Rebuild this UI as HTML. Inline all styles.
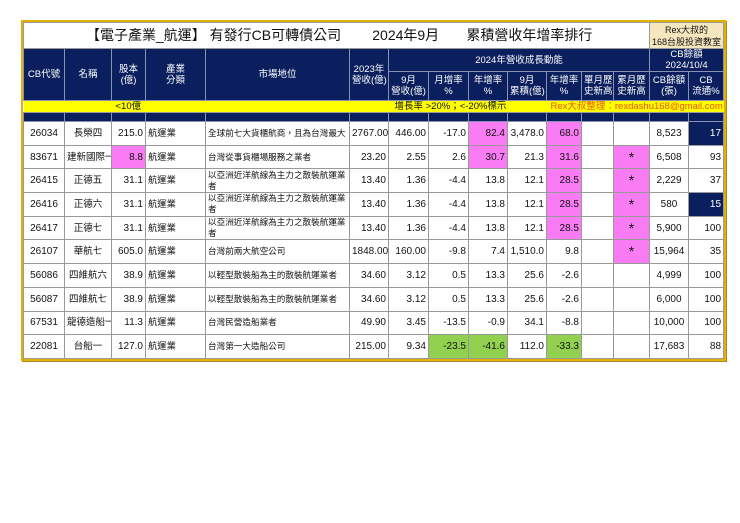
<!DOCTYPE html>
<html><head><meta charset="utf-8"><style>
body{margin:0;background:#fff;width:740px;height:523px;overflow:hidden;font-family:"Liberation Sans","Noto Sans CJK TC",sans-serif;}
.wrap{position:absolute;left:21px;top:20px;border:2px solid #e3b100;box-shadow:1px 1px 0 #a88a2a;}
table{border-collapse:collapse;table-layout:fixed;width:700px;font-size:10px;color:#111;}
td{border:1px solid #999;padding:0 2px;white-space:nowrap;overflow:hidden;text-align:center;line-height:11px;}
.h td{background:#0b1f5e;color:#fff;border-color:#8892b0;line-height:11px;font-size:9.5px;}
.t td{height:25px;font-size:14px;border-color:#999;}
.y td{background:#ffff00;height:11px;border:none;border-bottom:1px solid #999;font-size:9.5px;line-height:11px;}
.d td{background:#0b1f5e;height:8px;border-color:#8892b0;border-top:none;}
.r td{height:22.7px;}
.r td.n{text-align:right;}
.r td.l{text-align:left;font-size:8.6px;}
.r td.i{text-align:left;font-size:9.3px;}
.r td.c{font-size:9.5px;}
.p{background:#f97cf5;}
.g{background:#92d050;}
.nv{background:#0b1f5e;color:#fff;}
.st{font-size:14px;}
</style></head><body>
<div class="wrap"><table>
<colgroup><col style="width:41px"><col style="width:47px"><col style="width:34px"><col style="width:60px"><col style="width:144px"><col style="width:39px"><col style="width:40px"><col style="width:40px"><col style="width:39px"><col style="width:39px"><col style="width:35px"><col style="width:32px"><col style="width:36px"><col style="width:39px"><col style="width:35px"></colgroup>
<tr class="t"><td colspan="13" style="text-align:left;padding-left:62px">【電子產業_航運】 有發行CB可轉債公司&nbsp;&nbsp;&nbsp;&nbsp;&nbsp;&nbsp;&nbsp;&nbsp;2024年9月&nbsp;&nbsp;&nbsp;&nbsp;&nbsp;&nbsp;&nbsp;累積營收年增率排行</td><td colspan="2" style="background:#f5e6bd;font-size:9px;line-height:12px">Rex大叔的<br>168台股投資教室</td></tr>
<tr class="h" style="height:21px"><td rowspan="2">CB代號</td><td rowspan="2">名稱</td><td rowspan="2">股本<br>(億)</td><td rowspan="2">產業<br>分類</td><td rowspan="2">市場地位</td><td rowspan="2">2023年<br>營收(億)</td><td colspan="7">2024年營收成長動能</td><td colspan="2">CB餘額<br>2024/10/4</td></tr>
<tr class="h" style="height:29px"><td>9月<br>營收(億)</td><td>月增率<br>%</td><td>年增率<br>%</td><td>9月<br>累積(億)</td><td>年增率<br>%</td><td>單月歷<br>史新高</td><td>累月歷<br>史新高</td><td>CB餘額<br>(張)</td><td>CB<br>流通%</td></tr>
<tr class="y"><td></td><td></td><td colspan="3" style="text-align:left;padding-left:4px">&lt;10億</td><td></td><td colspan="4" style="text-align:left;padding-left:6px">增長率 &gt;20%；&lt;-20%標示</td><td colspan="5" style="color:#e8540a;text-align:left;padding-left:4px">Rex大叔整理：rexdashu168@gmail.com</td></tr>
<tr class="d"><td></td><td></td><td></td><td></td><td></td><td></td><td></td><td></td><td></td><td></td><td></td><td></td><td></td><td></td><td></td></tr>
<tr class="r"><td>26034</td><td class="c">長榮四</td><td class="n">215.0</td><td class="i">航運業</td><td class="l">全球前七大貨櫃航商，且為台灣最大</td><td class="n">2767.00</td><td class="n">446.00</td><td class="n">-17.0</td><td class="n p">82.4</td><td class="n">3,478.0</td><td class="n p">68.0</td><td></td><td></td><td>8,523</td><td class="n nv">17</td></tr>
<tr class="r"><td>83671</td><td class="c">建新國際一</td><td class="n p">8.8</td><td class="i">航運業</td><td class="l">台灣從事貨櫃場服務之業者</td><td class="n">23.20</td><td class="n">2.55</td><td class="n">2.6</td><td class="n p">30.7</td><td class="n">21.3</td><td class="n p">31.6</td><td></td><td class="p st">*</td><td>6,508</td><td class="n">93</td></tr>
<tr class="r"><td>26415</td><td class="c">正德五</td><td class="n">31.1</td><td class="i">航運業</td><td class="l" style="white-space:normal">以亞洲近洋航線為主力之散裝航運業者</td><td class="n">13.40</td><td class="n">1.36</td><td class="n">-4.4</td><td class="n">13.8</td><td class="n">12.1</td><td class="n p">28.5</td><td></td><td class="p st">*</td><td>2,229</td><td class="n">37</td></tr>
<tr class="r"><td>26416</td><td class="c">正德六</td><td class="n">31.1</td><td class="i">航運業</td><td class="l" style="white-space:normal">以亞洲近洋航線為主力之散裝航運業者</td><td class="n">13.40</td><td class="n">1.36</td><td class="n">-4.4</td><td class="n">13.8</td><td class="n">12.1</td><td class="n p">28.5</td><td></td><td class="p st">*</td><td>580</td><td class="n nv">15</td></tr>
<tr class="r"><td>26417</td><td class="c">正德七</td><td class="n">31.1</td><td class="i">航運業</td><td class="l" style="white-space:normal">以亞洲近洋航線為主力之散裝航運業者</td><td class="n">13.40</td><td class="n">1.36</td><td class="n">-4.4</td><td class="n">13.8</td><td class="n">12.1</td><td class="n p">28.5</td><td></td><td class="p st">*</td><td>5,900</td><td class="n">100</td></tr>
<tr class="r"><td>26107</td><td class="c">華航七</td><td class="n">605.0</td><td class="i">航運業</td><td class="l">台灣前兩大航空公司</td><td class="n">1848.00</td><td class="n">160.00</td><td class="n">-9.8</td><td class="n">7.4</td><td class="n">1,510.0</td><td class="n">9.8</td><td></td><td class="p st">*</td><td>15,964</td><td class="n">35</td></tr>
<tr class="r"><td>56086</td><td class="c">四維航六</td><td class="n">38.9</td><td class="i">航運業</td><td class="l">以輕型散裝船為主的散裝航運業者</td><td class="n">34.60</td><td class="n">3.12</td><td class="n">0.5</td><td class="n">13.3</td><td class="n">25.6</td><td class="n">-2.6</td><td></td><td></td><td>4,999</td><td class="n">100</td></tr>
<tr class="r"><td>56087</td><td class="c">四維航七</td><td class="n">38.9</td><td class="i">航運業</td><td class="l">以輕型散裝船為主的散裝航運業者</td><td class="n">34.60</td><td class="n">3.12</td><td class="n">0.5</td><td class="n">13.3</td><td class="n">25.6</td><td class="n">-2.6</td><td></td><td></td><td>6,000</td><td class="n">100</td></tr>
<tr class="r"><td>67531</td><td class="c">龍德造船一</td><td class="n">11.3</td><td class="i">航運業</td><td class="l">台灣民營造船業者</td><td class="n">49.90</td><td class="n">3.45</td><td class="n">-13.5</td><td class="n">-0.9</td><td class="n">34.1</td><td class="n">-8.8</td><td></td><td></td><td>10,000</td><td class="n">100</td></tr>
<tr class="r"><td>22081</td><td class="c">台船一</td><td class="n">127.0</td><td class="i">航運業</td><td class="l">台灣第一大造船公司</td><td class="n">215.00</td><td class="n">9.34</td><td class="n g">-23.5</td><td class="n g">-41.6</td><td class="n">112.0</td><td class="n g">-33.3</td><td></td><td></td><td>17,683</td><td class="n">88</td></tr>
</table></div>
</body></html>
